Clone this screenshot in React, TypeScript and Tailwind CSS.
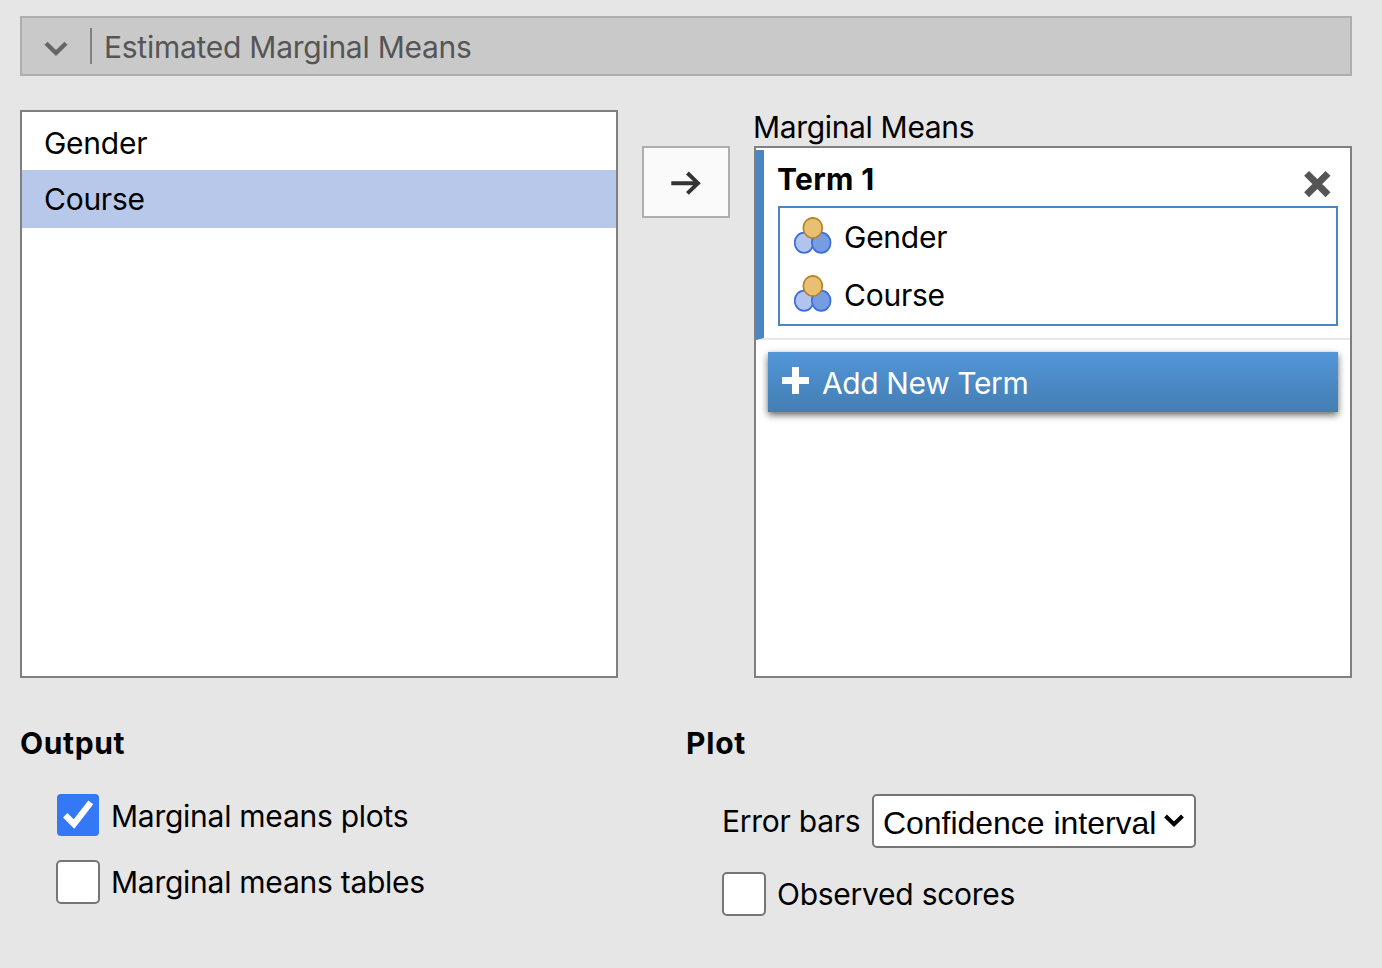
import React from "react";

function NominalIcon() {
  return (
    <svg width="38" height="38" viewBox="0 0 38 38" className="mb-[2px] shrink-0">
      <ellipse cx="10.1" cy="25.7" rx="9.4" ry="10.1" fill="#b0c4ee" stroke="#3d6dd8" strokeWidth="1.7" />
      <ellipse cx="27.2" cy="25.7" rx="9.4" ry="10.1" fill="#769de1" stroke="#3d6dd8" strokeWidth="1.7" />
      <ellipse cx="18.8" cy="10.9" rx="9.5" ry="10.1" fill="#e9c072" stroke="#b58329" strokeWidth="1.7" />
    </svg>
  );
}

function TermItem({ label }: { label: string }) {
  return (
    <div className="flex h-[58px] items-center gap-[13px] pl-[14px]">
      <NominalIcon />
      <span className="-ml-px tracking-[-0.25px]">{label}</span>
    </div>
  );
}

function Check({ label, checked = false }: { label: string; checked?: boolean }) {
  return (
    <label className="flex h-11 items-center gap-[11px]">
      {checked ? (
        <span className="mb-[2px] flex size-11 items-center justify-center">
          <span className="flex size-[42px] items-center justify-center rounded-[4px] bg-[#3478f6]">
            <svg width="42" height="42" viewBox="0 0 42 42">
              <path d="M8.2 21.2L17 30L33.8 8.3" fill="none" stroke="#fff" strokeWidth="6.2" />
            </svg>
          </span>
        </span>
      ) : (
        <span className="size-11 rounded-[5px] border-2 border-[#767676] bg-white" />
      )}
      <span>{label}</span>
    </label>
  );
}

export default function App() {
  return (
    <div className="flex h-[968px] w-[1382px] flex-col overflow-hidden whitespace-nowrap bg-[#e6e6e6] px-5 pt-4 font-['Inter',sans-serif] text-[30px] leading-9 tracking-[-0.26px] text-black">
      <header className="flex h-[60px] w-[1332px] shrink-0 items-center border-2 border-[#aeaeae] bg-[#c9c9c9] text-[#555]">
        <svg width="24" height="16" viewBox="0 0 24 16" className="ml-[22px] mt-[5px]">
          <path d="M2 2.2L12 12L22 2.2" fill="none" stroke="#666" strokeWidth="4.4" />
        </svg>
        <span className="ml-[22px] h-9 w-0.5 bg-[#808080]" />
        <h1 className="ml-3 pt-[2px]">Estimated Marginal Means</h1>
      </header>

      <main className="mt-[34px] flex h-[568px] w-[1332px] shrink-0">
        <div className="w-[598px] border-2 border-[#808080] bg-white">
          <div className="flex h-[58px] items-center pl-[22px] pt-1">Gender</div>
          <div className="flex h-[58px] items-center bg-[#b8c8ea] pl-[22px]">Course</div>
        </div>

        <button className="ml-6 mt-9 flex h-[72px] w-[88px] items-center justify-center border-2 border-[#aeaeae] bg-[#fafafa]">
          <svg width="30" height="24" viewBox="0 0 30 24" className="mt-[2px]">
            <path d="M0.3 12.2H27M16.4 2L27 12.2L16.4 22.4" fill="none" stroke="#333" strokeWidth="3.9" />
          </svg>
        </button>

        <section className="ml-6 flex w-[598px] flex-col">
          <h2 className="-ml-px h-9 leading-[34px] tracking-[-0.34px]">Marginal Means</h2>
          <div className="flex-1 border-2 border-[#808080] bg-white pt-0.5">
            <div className="h-[190px] border-b-2 border-l-8 border-b-[#e8e8e8] border-l-[#4a87c1] pl-[14px] pr-3">
              <div className="flex h-14 items-start justify-between">
                <h3 className="-ml-px pt-[11px] font-bold tracking-[0.35px]">Term 1</h3>
                <svg width="28" height="28" viewBox="0 0 28 28" className="mr-[7px] mt-5">
                  <path d="M3.6 3.4L25 24.8M25 3.4L3.6 24.8" stroke="#555" strokeWidth="7" />
                </svg>
              </div>
              <div className="h-[120px] border-2 border-[#4a87c1]">
                <TermItem label="Gender" />
                <TermItem label="Course" />
              </div>
            </div>
            <button className="ml-3 mt-3 flex h-[60px] w-[570px] items-center bg-linear-to-b from-[#5296d8] to-[#447eb3] text-white shadow-[0_3px_7px_rgba(0,0,0,0.6)]">
              <svg width="27" height="27" viewBox="0 0 27 27" className="mb-[3px] ml-[14px]">
                <path d="M13.5 0V27M0 13.5H27" stroke="#fff" strokeWidth="7" />
              </svg>
              <span className="ml-[13px] pt-[2px] tracking-[-0.38px]">Add New Term</span>
            </button>
          </div>
        </section>
      </main>

      <div className="mt-[47px] flex h-[240px] shrink-0">
        <section className="w-[666px]">
          <h2 className="font-bold tracking-[0.65px]">Output</h2>
          <div className="ml-9 mt-[33px] flex flex-col gap-[22px]">
            <Check label="Marginal means plots" checked />
            <Check label="Marginal means tables" />
          </div>
        </section>
        <section>
          <h2 className="font-bold tracking-[0.8px]">Plot</h2>
          <div className="ml-9 mt-[33px] flex h-[54px] items-center">
            <span className="w-[138px]">Error bars</span>
            <div className="ml-3 flex h-[54px] w-[324px] items-center rounded-[5px] border-2 border-[#767676] bg-white pl-[9px] font-['Liberation_Sans',Arial,sans-serif] text-[32px] tracking-[-0.03px]">
              <span className="pt-[3px]">Confidence interval</span>
              <svg width="20" height="14" viewBox="0 0 20 14" className="ml-2">
                <path d="M1.5 2L10 10.3L18.5 2" fill="none" stroke="#000" strokeWidth="4" />
              </svg>
            </div>
          </div>
          <div className="ml-9 mt-6">
            <Check label="Observed scores" />
          </div>
        </section>
      </div>
    </div>
  );
}
